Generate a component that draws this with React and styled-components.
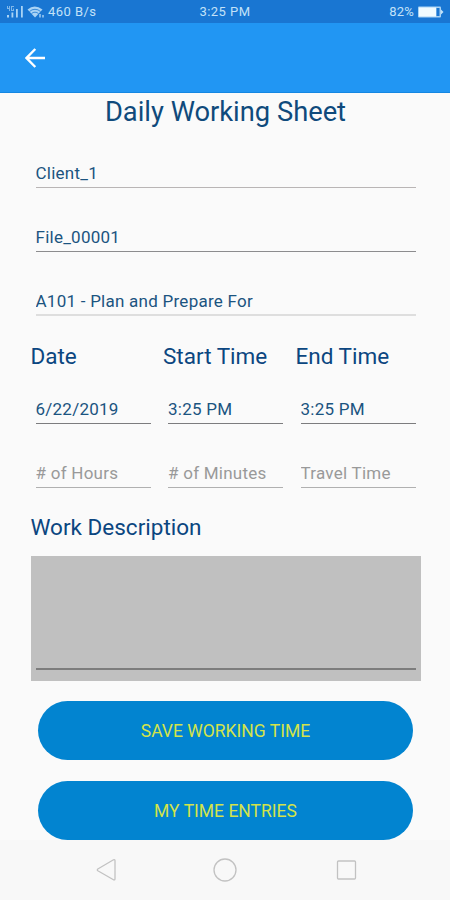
import React from 'react';
import styled, { createGlobalStyle } from 'styled-components';

const GlobalStyle = createGlobalStyle`
  * {
    box-sizing: border-box;
  }
  body {
    margin: 0;
    background: #fafafa;
    font-family: Roboto, sans-serif;
  }
`;

const Screen = styled.div`
  width: 450px;
  height: 900px;
  display: flex;
  flex-direction: column;
  background: #fafafa;
  overflow: hidden;
`;

const StatusBar = styled.div`
  height: 23px;
  flex-shrink: 0;
  display: grid;
  grid-template-columns: 1fr auto 1fr;
  align-items: center;
  padding: 0 6px;
  background: #1976d2;
  color: #c3e2f8;
  font-size: 13px;
  letter-spacing: 0.45px;
`;

const StatusGroup = styled.div`
  display: flex;
  align-items: center;
  justify-content: ${({ $end }) => ($end ? 'flex-end' : 'flex-start')};
  gap: ${({ $end }) => ($end ? '4px' : '3px')};
  white-space: nowrap;
  letter-spacing: ${({ $end }) => ($end ? '0.2px' : '0.45px')};
`;

const AppBar = styled.div`
  height: 70px;
  flex-shrink: 0;
  display: flex;
  align-items: center;
  padding: 0 25px;
  background: #2196f3;
  border-bottom: 1px solid #1487e2;
`;

const BackButton = styled.button`
  display: flex;
  padding: 0;
  border: none;
  background: none;
`;

const Content = styled.div`
  height: 747px;
  flex-shrink: 0;
  display: flex;
  flex-direction: column;
  padding: 0 29.5px 0 30.5px;
  & > * {
    flex-shrink: 0;
  }
`;

const Title = styled.h1`
  margin: 0;
  height: 31px;
  line-height: 38px;
  font-size: 27.3px;
  font-weight: 400;
  text-align: center;
  color: #0f4a7c;
  white-space: nowrap;
`;

const Field = styled.input`
  display: block;
  width: calc(100% - 10px);
  height: 40px;
  margin: 24px 5px 0;
  padding: ${({ $thick }) => ($thick ? '11px' : '10px')} 0 0;
  border: none;
  border-bottom: ${({ $thick }) => ($thick ? '2px' : '1px')} solid ${({ $line }) => $line};
  border-radius: 0;
  outline: none;
  background: transparent;
  color: #1b5480;
  font-family: inherit;
  font-size: 17px;
  letter-spacing: 0.25px;
  &::placeholder {
    color: #999;
    opacity: 1;
  }
`;

const Columns = styled.div`
  display: grid;
  grid-template-columns: 125px 125px 125px;
  column-gap: 7.5px;
`;

// the value row starts closer to its labels than a normal field does
const Entries = styled(Columns)`
  margin-top: -12px;
`;

const Label = styled.label`
  display: block;
  height: 32px;
  margin-top: 24px;
  line-height: ${({ $raised }) => ($raised ? '30px' : '32px')};
  font-size: 22.5px;
  color: #0b4680;
  white-space: nowrap;
`;

const Description = styled.div`
  height: 125px;
  margin-top: 12px;
  padding: 5px 5px 11px;
  background: #c0c0c0;
  & > textarea {
    display: block;
    width: 100%;
    height: 100%;
    padding: 0;
    border: none;
    border-bottom: 2px solid #7d7d7d;
    outline: none;
    resize: none;
    background: transparent;
    color: #1b5480;
    font-family: inherit;
    font-size: 17px;
  }
`;

const Actions = styled.div`
  display: flex;
  flex-direction: column;
  gap: 21px;
  padding: 20px 7.5px 0;
`;

const ActionButton = styled.button`
  height: 59px;
  padding: 1px 0 0;
  border: none;
  border-radius: 29.5px;
  background: #0284d0;
  color: #d3e34a;
  font-family: inherit;
  font-size: 17.5px;
`;

const NavBar = styled.div`
  height: 60px;
  flex-shrink: 0;
  display: flex;
  justify-content: space-between;
  align-items: center;
  padding: 0 92px;
  background: #f8f8f8;
`;

const NavIcon = ({ children }) => (
  <svg width="24" height="24" viewBox="0 0 24 24" fill="none" stroke="#c2c2c2" strokeWidth="1.3" strokeLinejoin="round">
    {children}
  </svg>
);

const SignalIcon = () => (
  <svg width="18" height="14" viewBox="0 0 18 14" fill="#a9d3f5">
    <path d="M1 1h1v2h1V1h1v5H3V4H1zM5 1h3v1H6v3h1V3.500h1V6H5z" opacity=".7" />
    <rect x="1" y="10" width="2" height="2.500" />
    <rect x="5.500" y="7.500" width="1.800" height="5" />
    <rect x="10" y="4" width="1.800" height="8.500" />
    <rect x="15" y="1" width="1.800" height="11.500" />
  </svg>
);

const WifiIcon = () => (
  <svg width="18" height="14" viewBox="0 0 18 14">
    <path d="M0.500 4.500q7-6 15 0L8 12.500z" fill="#a9d3f5" />
    <path d="M2.500 6.500a8 8 0 0 1 11 0M4.500 8.600a5 5 0 0 1 7 0" fill="none" stroke="#1976d2" strokeWidth=".8" />
    <path d="M13 9v3.500M16 10v2.500" stroke="#a9d3f5" strokeWidth="1.400" />
  </svg>
);

const BatteryIcon = () => (
  <svg width="26" height="12" viewBox="0 0 26 12">
    <rect x="0" y="0.500" width="23" height="11" rx="1" fill="#a9d3f5" />
    <rect x="1" y="1.500" width="17" height="9" fill="#f0fbff" />
    <rect x="18.500" y="2" width="3" height="8" fill="#1976d2" />
    <path d="M23 3.500L25.500 6 23 8.500z" fill="#c3e2f8" />
  </svg>
);

export default function App() {
  return (
    <>
      <GlobalStyle />
      <Screen>
        <StatusBar>
          <StatusGroup>
            <SignalIcon />
            <WifiIcon />
            <span>460 B/s</span>
          </StatusGroup>
          <span>3:25 PM</span>
          <StatusGroup $end>
            <span>82%</span>
            <BatteryIcon />
          </StatusGroup>
        </StatusBar>
        <AppBar>
          <BackButton aria-label="Back">
            <svg width="20" height="20" viewBox="0 0 20 20" fill="none" stroke="#fff" strokeWidth="2.400">
              <path d="M20 10H2M10.300 1L1.500 10l8.800 9" />
            </svg>
          </BackButton>
        </AppBar>
        <Content>
          <Title>Daily Working Sheet</Title>
          <Field defaultValue="Client_1" $line="#b9b5b5" />
          <Field defaultValue="File_00001" $line="#8c8c8e" />
          <Field defaultValue="A101 - Plan and Prepare For" $line="#dedede" $thick />
          <Columns>
            <Label>Date</Label>
            <Label>Start Time</Label>
            <Label>End Time</Label>
          </Columns>
          <Entries>
            <Field defaultValue="6/22/2019" $line="#7c7c7e" />
            <Field defaultValue="3:25 PM" $line="#7c7c7e" />
            <Field defaultValue="3:25 PM" $line="#7c7c7e" />
            <Field placeholder="# of Hours" $line="#b0b0b0" />
            <Field placeholder="# of Minutes" $line="#b0b0b0" />
            <Field placeholder="Travel Time" $line="#b0b0b0" />
          </Entries>
          <Label $raised>Work Description</Label>
          <Description>
            <textarea aria-label="Work Description" />
          </Description>
          <Actions>
            <ActionButton>SAVE WORKING TIME</ActionButton>
            <ActionButton>MY TIME ENTRIES</ActionButton>
          </Actions>
        </Content>
        <NavBar>
          <NavIcon>
            <path d="M5.800 11L21.500 1.800q1.500-.6 1.500 1v18q0 1.600-1.500 1L5.800 12.800q-1-.9 0-1.800z" />
          </NavIcon>
          <NavIcon>
            <circle cx="12" cy="12" r="11" />
          </NavIcon>
          <NavIcon>
            <rect x="3.500" y="3" width="18" height="18" rx="1" />
          </NavIcon>
        </NavBar>
      </Screen>
    </>
  );
}
